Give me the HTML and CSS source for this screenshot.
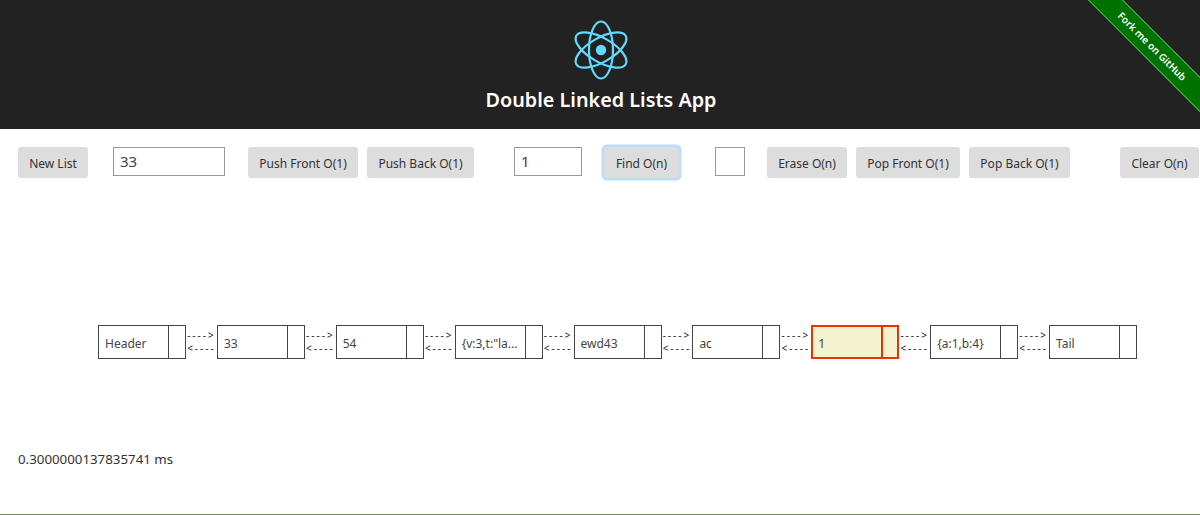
FILE: index.html
```html
<!DOCTYPE html>
<html lang="en">
<head>
<meta charset="utf-8">
<title>Double Linked Lists App</title>
<link rel="stylesheet" href="styles.css">
</head>
<body>
<header class="app-header">
  <svg class="logo" viewBox="0 0 60 60" width="60" height="60" aria-hidden="true">
    <g fill="none" stroke="#61dafb" stroke-width="2.2">
      <ellipse cx="30" cy="30" rx="28.5" ry="12" transform="rotate(90 30 30)"/>
      <ellipse cx="30" cy="30" rx="28.5" ry="12" transform="rotate(30 30 30)"/>
      <ellipse cx="30" cy="30" rx="28.5" ry="12" transform="rotate(150 30 30)"/>
    </g>
    <circle cx="30" cy="30" r="5.2" fill="#61dafb"/>
  </svg>
  <h1 class="title">Double Linked Lists App</h1>
  <a class="ribbon" href="#">Fork me on GitHub</a>
</header>
<main class="content">
  <div class="toolbar">
    <button class="btn w-new">New List</button>
    <input class="field w-value gap-25" value="33">
    <div class="group gap-23">
      <button class="btn w-pf">Push Front O(1)</button>
      <button class="btn w-pb">Push Back O(1)</button>
    </div>
    <input class="field w-find gap-40" value="1">
    <button class="btn focused w-findbtn gap-22">Find O(n)</button>
    <input class="field w-small gap-36">
    <div class="group gap-22">
      <button class="btn w-erase">Erase O(n)</button>
      <button class="btn w-popf">Pop Front O(1)</button>
      <button class="btn w-popb">Pop Back O(1)</button>
    </div>
    <button class="btn w-clear gap-50">Clear O(n)</button>
  </div>
  <div class="list">
    <div class="node"><span class="val">Header</span><span class="ptr"></span></div>
    <div class="link"><span>----&gt;</span><span>&lt;----</span></div>
    <div class="node"><span class="val">33</span><span class="ptr"></span></div>
    <div class="link"><span>----&gt;</span><span>&lt;----</span></div>
    <div class="node"><span class="val">54</span><span class="ptr"></span></div>
    <div class="link"><span>----&gt;</span><span>&lt;----</span></div>
    <div class="node"><span class="val">{v:3,t:"la...</span><span class="ptr"></span></div>
    <div class="link"><span>----&gt;</span><span>&lt;----</span></div>
    <div class="node"><span class="val">ewd43</span><span class="ptr"></span></div>
    <div class="link"><span>----&gt;</span><span>&lt;----</span></div>
    <div class="node"><span class="val">ac</span><span class="ptr"></span></div>
    <div class="link"><span>----&gt;</span><span>&lt;----</span></div>
    <div class="node active"><span class="val">1</span><span class="ptr"></span></div>
    <div class="link"><span>----&gt;</span><span>&lt;----</span></div>
    <div class="node"><span class="val">{a:1,b:4}</span><span class="ptr"></span></div>
    <div class="link"><span>----&gt;</span><span>&lt;----</span></div>
    <div class="node"><span class="val">Tail</span><span class="ptr"></span></div>
  </div>
  <p class="timing">0.3000000137835741 ms</p>
</main>
</body>
</html>
```
FILE: styles.css
```css
* { box-sizing: border-box; }
html, body { margin: 0; padding: 0; }
body {
  width: 1200px;
  height: 515px;
  overflow: hidden;
  border-bottom: 1px solid #7b8a5c;
  font-family: "Noto Sans", "Open Sans", sans-serif;
  color: #333;
  background: #fff;
}
.app-header {
  position: relative;
  height: 129px;
  background: #222;
  overflow: hidden;
  display: flex;
  flex-direction: column;
  align-items: center;
  padding-top: 20px;
}
.logo { display: block; margin-left: 2px; }
.title {
  margin: 6px 0 0 2px;
  font-size: 19.8px;
  font-weight: 600;
  line-height: 28px;
  color: #fff;
}
.ribbon {
  position: absolute;
  left: 1052px;
  top: 34px;
  width: 200px;
  height: 25px;
  transform: rotate(45deg);
  background: #007200;
  border-top: 1px solid #5cae5c;
  border-bottom: 1px solid #5cae5c;
  color: #fff;
  font-size: 10px;
  font-weight: 600;
  line-height: 23px;
  text-align: center;
  text-decoration: none;
}
.toolbar {
  display: flex;
  align-items: flex-start;
  padding: 18px 0 0 18px;
  height: 50px;
}
.group { display: flex; gap: 9px; }
.gap-22 { margin-left: 22px; }
.gap-23 { margin-left: 23px; }
.gap-25 { margin-left: 25px; }
.gap-36 { margin-left: 36px; }
.gap-40 { margin-left: 40px; }
.gap-50 { margin-left: 50px; }
.btn {
  height: 31px;
  padding: 1px 0 0;
  border: 0;
  border-radius: 3px;
  background: #ddd;
  color: #333;
  font: 12px "Noto Sans", "Open Sans", sans-serif;
}
.focused { box-shadow: 0 0 0 2.5px #b9dcff; }
.w-new { width: 70px; }
.w-pf { width: 110px; }
.w-pb { width: 107px; }
.w-findbtn { width: 75px; }
.w-erase { width: 80px; }
.w-popf { width: 104px; }
.w-popb { width: 101px; }
.w-clear { width: 79px; }
.field {
  height: 29px;
  padding: 0 6px 2px;
  border: 1px solid #999;
  border-radius: 0;
  background: #fff;
  color: #444;
  font: 15px "Noto Sans", "Open Sans", sans-serif;
  outline: none;
}
.w-value { width: 112px; }
.w-find { width: 68px; }
.w-small { width: 30px; }
.list {
  display: flex;
  align-items: center;
  margin: 146px 0 0 98px;
  height: 34px;
}
.node {
  display: flex;
  flex: none;
  width: 88px;
  height: 34px;
  border: 1px solid #444;
  font-size: 12px;
  color: #444;
}
.val {
  flex: 1;
  min-width: 0;
  padding: 2px 0 0 6px;
  line-height: 32px;
  white-space: nowrap;
  overflow: hidden;
}
.ptr {
  flex: none;
  width: 17px;
  border-left: 1px solid #444;
}
.node.active {
  border: 2px solid #f03000;
  background: #f3f3d0;
}
.node.active .val { padding-left: 5px; line-height: 30px; }
.node.active .ptr { border-left: 2px solid #f03000; width: 16px; }
.link {
  display: flex;
  flex: none;
  flex-direction: column;
  align-items: center;
  justify-content: center;
  width: 30.875px;
  height: 34px;
  font-size: 10px;
  line-height: 13px;
  letter-spacing: 2px;
  color: #222;
  white-space: nowrap;
}
.timing {
  margin: 91px 0 0 18px;
  font-size: 13.3px;
  line-height: 18px;
  color: #333;
}
```
